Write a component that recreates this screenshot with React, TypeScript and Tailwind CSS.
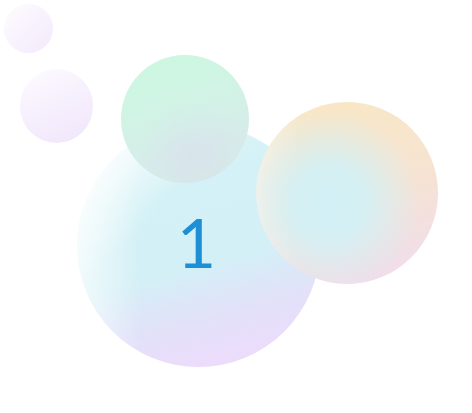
import React from "react";

export default function App() {
  return (
    <div className="relative w-[472px] h-[413px] bg-white overflow-hidden">
      <div className="absolute left-[4px] top-[4px] w-[49px] h-[49px] rounded-full bg-[linear-gradient(135deg,#fefdff_0%,#f8f1fd_55%,#f4eafc_100%)]" />
      <div className="absolute left-[20px] top-[69px] w-[73px] h-[74px] rounded-full bg-[linear-gradient(155deg,#fdfcff_0%,#f6effd_50%,#f1e5fb_100%)]" />
      <div className="absolute left-[77px] top-[124px] w-[243px] h-[243px] rounded-full bg-[linear-gradient(135deg,rgba(255,255,255,1)_5%,rgba(255,255,255,0)_35%),linear-gradient(90deg,rgba(255,255,255,0.7)_0%,rgba(255,255,255,0)_26%),linear-gradient(165deg,#e6f7fb_0%,#d3f1f6_28%,#d3f0f6_56%,#e2e1f9_74%,#ecdcfb_90%)]" />
      <div className="absolute left-[121px] top-[55px] w-[128px] h-[128px] rounded-full bg-[radial-gradient(circle_at_58%_80%,rgba(218,222,238,0.6)_0%,rgba(218,222,238,0)_45%),linear-gradient(160deg,#cbf9df_0%,#d2f2e6_45%,#d6ecea_70%,#d5ebe2_100%)]" />
      <div className="absolute left-[256px] top-[102px] w-[182px] h-[182px] rounded-full bg-[radial-gradient(circle_at_40%_55%,#d2f1f6_0%,rgba(210,241,246,0.9)_25%,rgba(210,241,246,0)_62%),linear-gradient(90deg,rgba(255,255,255,0.5)_0%,rgba(255,255,255,0)_25%),linear-gradient(165deg,#f9e8c4_0%,#f6e3d2_50%,#efdcf0_100%)]" />
      <div className="absolute left-[77px] top-[124px] w-[243px] h-[243px] flex items-center justify-center">
        <span
          className="text-[68px] leading-none text-[#1c8fd6] mb-[8px] ml-[-4px]"
          style={{ fontFamily: "Lato, 'Noto Sans', sans-serif" }}
        >
          1
        </span>
      </div>
    </div>
  );
}
